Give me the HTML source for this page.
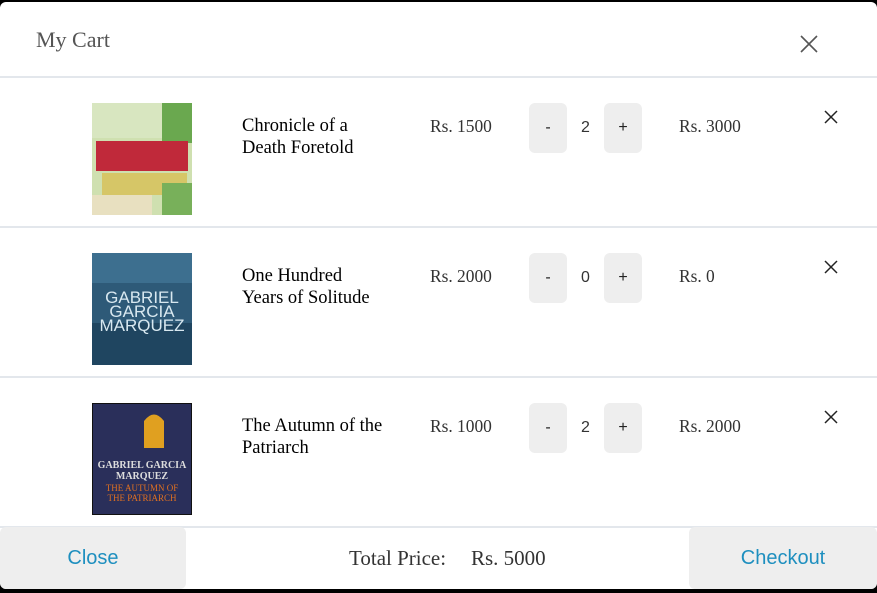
<!DOCTYPE html>
<html><head><style>
body{margin:0;background:#000;width:877px;height:593px;overflow:hidden;font-family:"Liberation Serif",serif;}
.m{position:absolute;left:0;top:2px;width:877px;height:587px;background:#fff;border-radius:6px;overflow:hidden;}
.hd{position:absolute;left:0;top:0;width:877px;height:74px;border-bottom:2px solid #e3e7ec;}
.hd .t{position:absolute;left:36px;top:25px;font-size:22px;color:#555;}
.x{position:absolute;}
.row{position:absolute;left:0;width:877px;height:148px;border-bottom:2px solid #e3e7ec;}
.img{position:absolute;left:92px;top:25px;width:100px;height:112px;}
.nm{position:absolute;left:242px;top:37px;font-size:18.5px;line-height:22px;color:#000;}
.pr{position:absolute;left:430px;top:38px;font-size:17.4px;color:#333;}
.tot{position:absolute;left:679px;top:38px;font-size:17.4px;color:#333;}
.b{position:absolute;top:25px;width:38px;height:50px;background:#eee;border-radius:6px;font-family:"Liberation Sans",sans-serif;font-size:16px;color:#222;text-align:center;line-height:50px;}
.q{position:absolute;left:567px;width:37px;top:25px;line-height:50px;text-align:center;font-family:"Liberation Sans",sans-serif;font-size:16px;color:#333;}
.ft{position:absolute;left:0;top:525px;width:877px;height:62px;}
.fb{position:absolute;top:0;height:62px;background:#eee;border-radius:6px;color:#1e8fbf;font-family:"Liberation Sans",sans-serif;font-size:20px;text-align:center;line-height:62px;}
</style></head><body>
<div class="m">
<div class="hd"><div class="t">My Cart</div>
<svg class="x" style="left:800px;top:33px" width="18" height="18"><path d="M1 1L17 17M17 1L1 17" stroke="#555" stroke-width="1.6"/></svg></div>

<div class="row" style="top:76px">
<svg class="img" viewBox="0 0 100 112"><rect width="100" height="112" fill="#cfe0b0"/><rect x="0" y="0" width="100" height="35" fill="#d8e6c0"/><rect x="70" y="0" width="30" height="40" fill="#6aa84f"/><rect x="4" y="38" width="92" height="30" fill="#c0293a"/><rect x="10" y="70" width="85" height="22" fill="#d6c667"/><rect x="70" y="80" width="30" height="32" fill="#78b05a"/><rect x="0" y="92" width="60" height="20" fill="#e8e0c0"/></svg>
<div class="nm">Chronicle of a<br>Death Foretold</div>
<div class="pr">Rs. 1500</div>
<div class="b" style="left:529px">-</div><div class="q">2</div><div class="b" style="left:604px">+</div>
<div class="tot">Rs. 3000</div>
<svg class="x" style="left:824px;top:32px" width="14" height="14"><path d="M1 1L13 13M13 1L1 13" stroke="#222" stroke-width="1.5"/></svg>
</div>

<div class="row" style="top:226px">
<svg class="img" viewBox="0 0 100 112"><rect width="100" height="112" fill="#2e5a78"/><rect x="0" y="0" width="100" height="30" fill="#3d6f8f"/><rect x="0" y="70" width="100" height="42" fill="#1f4560"/><text x="50" y="50" font-family="Liberation Sans" font-size="17" fill="#d8e8f0" text-anchor="middle">GABRIEL</text><text x="50" y="64" font-family="Liberation Sans" font-size="17" fill="#d8e8f0" text-anchor="middle">GARCIA</text><text x="50" y="78" font-family="Liberation Sans" font-size="17" fill="#d8e8f0" text-anchor="middle">MARQUEZ</text></svg>
<div class="nm">One Hundred<br>Years of Solitude</div>
<div class="pr">Rs. 2000</div>
<div class="b" style="left:529px">-</div><div class="q">0</div><div class="b" style="left:604px">+</div>
<div class="tot">Rs. 0</div>
<svg class="x" style="left:824px;top:32px" width="14" height="14"><path d="M1 1L13 13M13 1L1 13" stroke="#222" stroke-width="1.5"/></svg>
</div>

<div class="row" style="top:376px">
<svg class="img" viewBox="0 0 100 112"><rect width="100" height="112" fill="#2a2f5a"/><rect x="0" y="0" width="100" height="112" fill="none" stroke="#111" stroke-width="2"/><path d="M52 45V18Q62 5 72 18V45Z" fill="#e0a020"/><text x="50" y="65" font-family="Liberation Serif" font-size="10" font-weight="bold" fill="#ddd" text-anchor="middle">GABRIEL GARCIA</text><text x="50" y="76" font-family="Liberation Serif" font-size="10" font-weight="bold" fill="#ddd" text-anchor="middle">MARQUEZ</text><text x="50" y="88" font-family="Liberation Serif" font-size="9" fill="#e07020" text-anchor="middle">THE AUTUMN OF</text><text x="50" y="98" font-family="Liberation Serif" font-size="9" fill="#e07020" text-anchor="middle">THE PATRIARCH</text></svg>
<div class="nm">The Autumn of the<br>Patriarch</div>
<div class="pr">Rs. 1000</div>
<div class="b" style="left:529px">-</div><div class="q">2</div><div class="b" style="left:604px">+</div>
<div class="tot">Rs. 2000</div>
<svg class="x" style="left:824px;top:32px" width="14" height="14"><path d="M1 1L13 13M13 1L1 13" stroke="#222" stroke-width="1.5"/></svg>
</div>

<div class="ft">
<div class="fb" style="left:0;width:186px">Close</div>
<div style="position:absolute;left:349px;top:19px;font-size:21px;color:#333">Total Price:</div>
<div style="position:absolute;left:471px;top:19px;font-size:21px;color:#333">Rs. 5000</div>
<div class="fb" style="left:689px;width:188px">Checkout</div>
</div>
</div>
</body></html>
